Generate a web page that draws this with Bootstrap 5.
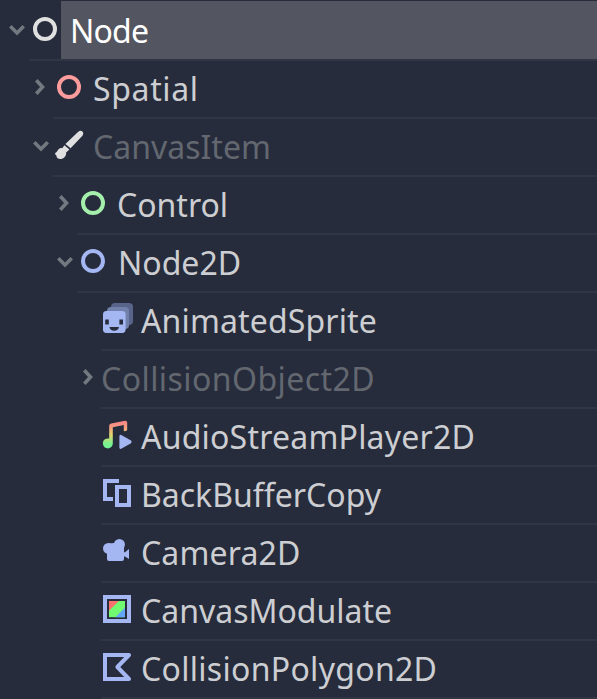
<!DOCTYPE html>
<html lang="en">
<head>
<meta charset="utf-8">
<meta name="viewport" content="width=device-width, initial-scale=1">
<title>Node tree</title>
<link href="https://cdn.jsdelivr.net/npm/bootstrap@5.3.0/dist/css/bootstrap.min.css" rel="stylesheet">
<style>
body{background:#262c3b;color:#cdced2;font-family:"Noto Sans",sans-serif;font-size:32px;line-height:58px;overflow:hidden}
.tree{padding-top:1px;height:699px}
.node{height:58px;padding-left:5px}
.lv1{padding-left:29px}.lv2{padding-left:53px}.lv3{padding-left:77px}
.arrow{width:24px;height:58px;fill:none;stroke:#747881;stroke-width:3.6}
.entry{height:60px;border-bottom:2px solid #303645}
.glyph{width:32px;height:32px;margin-top:12px}
.name{padding-left:8px;height:58px;padding-top:1px}
.bare{padding-left:0}
.wide-1{letter-spacing:.14px}.wide-2{letter-spacing:.22px}.wide-3{letter-spacing:.3px}.wide-4{letter-spacing:.44px}.wide-5{letter-spacing:.65px}
.tight{letter-spacing:-.8px}
.push{padding-left:9px}
.picked{background:#535660;color:#fff}
.off{color:#636770}
</style>
</head>
<body>
<svg class="d-none">
<symbol id="down" viewBox="0 0 24 58"><path d="M5.3 25.3L12 32l6.700-6.700"/></symbol>
<symbol id="right" viewBox="0 0 24 58"><path d="M7.300 21.300L13.500 28l-6.200 6.700"/></symbol>
<symbol id="ring" viewBox="0 0 16 16"><circle cx="8" cy="8" r="5" fill="none" stroke="currentColor" stroke-width="2"/></symbol>
</svg>
<main class="tree overflow-hidden">
<div class="node d-flex"><svg class="arrow flex-shrink-0"><use href="#down"/></svg><div class="entry d-flex flex-grow-1"><svg class="glyph flex-shrink-0" color="#e0e0e0"><use href="#ring"/></svg><span class="name picked push tight flex-grow-1">Node</span></div></div>
<div class="node lv1 d-flex"><svg class="arrow flex-shrink-0"><use href="#right"/></svg><div class="entry d-flex flex-grow-1"><svg class="glyph flex-shrink-0" color="#fc9c9c"><use href="#ring"/></svg><span class="name wide-5">Spatial</span></div></div>
<div class="node lv1 d-flex"><svg class="arrow flex-shrink-0"><use href="#down"/></svg><div class="entry d-flex flex-grow-1"><svg class="glyph flex-shrink-0" viewBox="0 0 16 16" fill="#e0e0e0"><path d="M12.500 1.500Q13.800.4 14.700 1.200T14.600 3.500L8.800 9.600 6.200 7.500z"/><path d="M5.700 8.100L8.200 10.200 6.700 11.600 4.600 9.600z"/><path d="M4.100 9.500c1.500 0 2.600 1.100 2.500 2.500-.1 1.800-1.300 3-2.900 3-1.300 0-2-.7-2-1.700L1 12.600l.3-.9c1 .1 1-2.200 2.800-2.200z"/></svg><span class="name off">CanvasItem</span></div></div>
<div class="node lv2 d-flex"><svg class="arrow flex-shrink-0"><use href="#right"/></svg><div class="entry d-flex flex-grow-1"><svg class="glyph flex-shrink-0" color="#a5efac"><use href="#ring"/></svg><span class="name">Control</span></div></div>
<div class="node lv2 d-flex"><svg class="arrow flex-shrink-0"><use href="#down"/></svg><div class="entry d-flex flex-grow-1"><svg class="glyph flex-shrink-0" color="#a5b7f3"><use href="#ring"/></svg><span class="name push">Node2D</span></div></div>
<div class="node lv3 d-flex"><span class="arrow flex-shrink-0"></span><div class="entry d-flex flex-grow-1"><svg class="glyph flex-shrink-0" viewBox="0 0 16 16"><rect x="5" width="11" height="11" rx="2" fill="#59648a"/><rect x="3" y="2" width="11" height="11" rx="2" fill="#7280ac"/><rect x="1" y="4" width="11.300" height="11" rx="1.700" fill="#a5b7f3"/><path d="M2.100 8.200h1.800v2.600H2.100zM9.200 8.200h1.800v2.600H9.200zM4.200 12h4.800Q8.600 13.900 6.600 13.900T4.200 12z" fill="#262c3b"/></svg><span class="name wide-1">AnimatedSprite</span></div></div>
<div class="node lv3 d-flex"><svg class="arrow flex-shrink-0"><use href="#right"/></svg><div class="entry d-flex flex-grow-1"><span class="name bare off wide-4">CollisionObject2D</span></div></div>
<div class="node lv3 d-flex"><span class="arrow flex-shrink-0"></span><div class="entry d-flex flex-grow-1"><svg class="glyph flex-shrink-0" viewBox="0 0 16 16"><defs><linearGradient id="tune" gradientUnits="userSpaceOnUse" x1="0" y1="1" x2="0" y2="15"><stop stop-color="#fb8585"/><stop offset=".2" stop-color="#f59883"/><stop offset=".5" stop-color="#e3d56c"/><stop offset=".8" stop-color="#7cf08c"/><stop offset="1" stop-color="#70f598"/></linearGradient></defs><path d="M4.100 3.100Q4.200 2.400 5.100 2.200L12 .9q1.100-.1 1.100 1V5.500q-.5.800-1.700.5V3L5.900 4.100v8.300A2.500 2.500 0 1 1 4.100 9.800z" fill="url(#tune)"/><path d="M9.200 8.700q0-1 .9-.7l4.900 2.800q.7.600 0 1.300l-4.900 2.800q-.8.300-.9-.7z" fill="#a5b7f3"/></svg><span class="name wide-2">AudioStreamPlayer2D</span></div></div>
<div class="node lv3 d-flex"><span class="arrow flex-shrink-0"></span><div class="entry d-flex flex-grow-1"><svg class="glyph flex-shrink-0" viewBox="0 0 16 16" fill="#a5b7f3"><path d="M1 1h8v2H3v7h3v2H1z"/><path fill-rule="evenodd" d="M7 4h8v11H7zM9 6v7h4V6z"/></svg><span class="name">BackBufferCopy</span></div></div>
<div class="node lv3 d-flex"><span class="arrow flex-shrink-0"></span><div class="entry d-flex flex-grow-1"><svg class="glyph flex-shrink-0" viewBox="0 0 16 16" fill="#a5b7f3"><circle cx="9.200" cy="4.700" r="2.750"/><circle cx="3.700" cy="6.700" r="2.700"/><path d="M4 4.300L6.700 4l4.800 1.600V8.600h.5L14 7v5L12 10.800h-.5V12q0 1-1 1H4q-1 0-1-1V8z"/></svg><span class="name wide-1">Camera2D</span></div></div>
<div class="node lv3 d-flex"><span class="arrow flex-shrink-0"></span><div class="entry d-flex flex-grow-1"><svg class="glyph flex-shrink-0" viewBox="0 0 16 16"><path d="M2 2h12v12H2z" fill="none" stroke="#a5b7f3" stroke-width="2"/><path d="M4 4h8v8.100H4z" fill="#70fb70"/><path d="M4 4h4.900L4 8.900z" fill="#fc7070"/><path d="M12 7.300V12.100H7.200z" fill="#64a6fa"/></svg><span class="name">CanvasModulate</span></div></div>
<div class="node lv3 d-flex"><span class="arrow flex-shrink-0"></span><div class="entry d-flex flex-grow-1"><svg class="glyph flex-shrink-0" viewBox="0 0 16 16"><path d="M14 2H2v12h12L8.200 8z" fill="none" stroke="#a5b7f3" stroke-width="2" stroke-linejoin="round"/><path d="M1 1h2v2H1zM1 13h2v2H1z" fill="#a5b7f3"/></svg><span class="name wide-3">CollisionPolygon2D</span></div></div>
</main>
<script src="https://cdn.jsdelivr.net/npm/bootstrap@5.3.0/dist/js/bootstrap.bundle.min.js"></script>
</body>
</html>
